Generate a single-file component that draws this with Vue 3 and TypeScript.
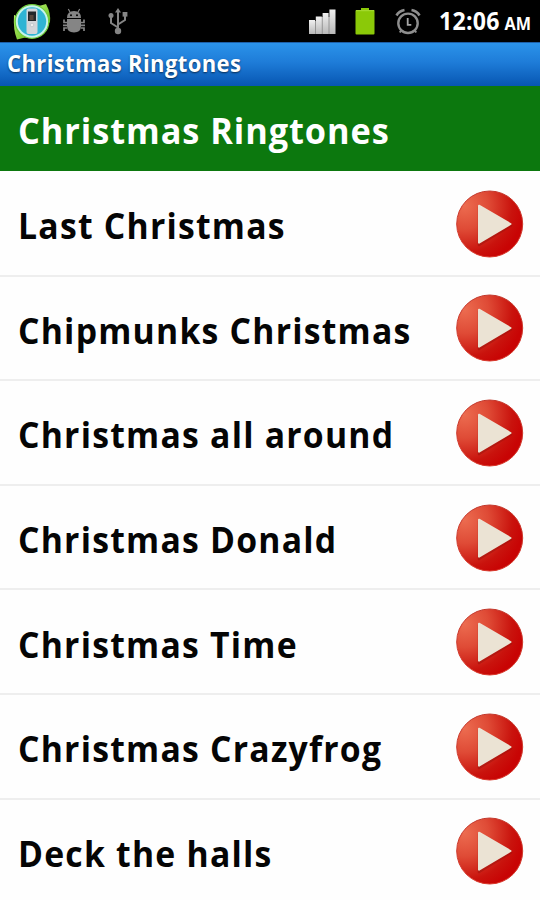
<script setup lang="ts">
interface Ringtone {
  id: string
  title: string
}

const title = 'Christmas Ringtones'

const ringtones: Ringtone[] = [
  { id: 'last', title: 'Last Christmas' },
  { id: 'chipmunks', title: 'Chipmunks Christmas' },
  { id: 'around', title: 'Christmas all around' },
  { id: 'donald', title: 'Christmas Donald' },
  { id: 'time', title: 'Christmas Time' },
  { id: 'crazyfrog', title: 'Christmas Crazyfrog' },
  { id: 'deck', title: 'Deck the halls' },
]
</script>

<template>
  <div class="screen">
    <header class="status">
      <svg class="app-icon" viewBox="0 0 40 42" width="40" height="42">
        <defs>
          <linearGradient id="leaf" x1="0" y1="0" x2="1" y2="1">
            <stop offset="0" stop-color="#b8ef6a" />
            <stop offset="1" stop-color="#62bb20" />
          </linearGradient>
        </defs>
        <path d="M2 15Q4 15 6 20Q8 33 20 37Q12 37 5 39.5Q1 30 2 15Z" fill="url(#leaf)" />
        <path d="M34 4Q39 13 38 22Q36 25 34 24L31 10Q27 7 23 6Q29 6 34 4Z" fill="url(#leaf)" />
        <circle cx="20" cy="21.5" r="16.8" fill="#c8f4ea" stroke="#72cc3b" stroke-width="1.3" />
        <circle cx="20" cy="21.5" r="14.2" fill="#2fb4d4" />
        <rect x="14.5" y="8.5" width="11" height="25.5" rx="2" fill="#d3d5d9" />
        <rect x="16" y="11.5" width="8" height="9.5" fill="#24282c" />
        <rect x="17.5" y="15" width="4" height="5" fill="#58483f" />
        <circle cx="20" cy="25" r="1.8" fill="#eee" stroke="#b8bfc5" stroke-width=".7" />
      </svg>
      <svg class="debug-icon" viewBox="0 0 24 26" width="24" height="26">
        <g fill="#858585" stroke="#858585">
          <path d="M5 10Q5 3 12 3T19 10Z" stroke="none" />
          <path d="M8 4L6.3 1M16 4L17.7 1" stroke-width="1.2" />
          <path d="M5 11H19V18Q19 24.5 12 24.5T5 18Z" stroke="none" />
          <path d="M5 14.5H2V11.5M5 17.3H1M5 20H2V23M19 14.5H22V11.5M19 17.3H23M19 20H22V23" fill="none" stroke-width="1.7" />
        </g>
        <circle cx="9" cy="7.2" r="1" fill="#000" />
        <circle cx="15" cy="7.2" r="1" fill="#000" />
      </svg>
      <svg class="usb-icon" viewBox="0 0 20 28" width="20" height="28">
        <path d="M10 4V24M10 20.5L3 16V9M10 17.5L17 13V7" fill="none" stroke="#858585" stroke-width="2" />
        <path d="M10 1L13 5.5H7Z" fill="#858585" />
        <circle cx="10" cy="24" r="3.2" fill="#858585" />
        <circle cx="3" cy="8.5" r="2.5" fill="#858585" />
        <rect x="14.6" y="5" width="4.8" height="4.6" fill="#858585" />
      </svg>
      <svg class="signal-icon" viewBox="0 0 27 26" width="27" height="26">
        <defs>
          <linearGradient id="bar" x1="0" y1="0" x2="0" y2="1">
            <stop offset="0" stop-color="#f0f0f0" />
            <stop offset="1" stop-color="#b8b8b8" />
          </linearGradient>
        </defs>
        <rect x="1" y="12" width="25" height="13" fill="#858585" />
        <rect x="8" y="8" width="18" height="6" fill="#858585" />
        <g fill="url(#bar)">
          <rect x="0" y="11" width="6" height="14" />
          <rect x="6.8" y="7.5" width="6" height="17.5" />
          <rect x="13.6" y="4" width="6" height="21" />
          <rect x="20.4" y="0.5" width="6.1" height="24.5" />
        </g>
      </svg>
      <svg class="battery-icon" viewBox="0 0 20 28" width="20" height="28">
        <path d="M6 3V1H14V3H19Q19.5 3 19.5 4V26.5Q19.5 27.5 18.5 27.5H1.5Q.5 27.5 .5 26.5V4Q.5 3 1.5 3Z" fill="#8bc908" />
        <path d="M1 3.7H19" stroke="#a9dc35" stroke-width="1" />
      </svg>
      <svg class="alarm-icon" viewBox="0 0 26 28" width="26" height="28">
        <circle cx="13" cy="16.3" r="9.7" fill="none" stroke="#8e8e8e" stroke-width="2.4" />
        <path d="M1.5 8.5Q4 4 9.5 3M24.5 8.5Q22 4 16.5 3" fill="none" stroke="#8e8e8e" stroke-width="2.6" />
        <path d="M6.5 23L4.8 25.5M19.5 23L21.2 25.5" stroke="#8e8e8e" stroke-width="2" />
        <path d="M12.7 11V17.8H16.3" fill="none" stroke="#a5a5a5" stroke-width="1.8" />
      </svg>
      <div class="clock"><span class="time">12:06</span><span class="period">AM</span></div>
    </header>

    <div class="titlebar"><span class="titlebar-text">{{ title }}</span></div>
    <h1 class="heading"><span class="heading-text">{{ title }}</span></h1>

    <ul class="list">
      <li v-for="tone in ringtones" :key="tone.id" class="row">
        <span class="name">{{ tone.title }}</span>
        <button class="play" type="button" :aria-label="tone.title">
          <svg viewBox="0 0 68 68" width="68" height="68">
            <defs>
              <radialGradient :id="'red-' + tone.id" cx=".12" cy=".22" r=".9">
                <stop offset="0" stop-color="#ec6c50" />
                <stop offset=".4" stop-color="#df4b36" />
                <stop offset=".8" stop-color="#c9130d" />
                <stop offset="1" stop-color="#c80404" />
              </radialGradient>
              <linearGradient :id="'rim-' + tone.id" x1="0" y1="0" x2="0" y2="1">
                <stop offset="0" stop-color="#c2372b" />
                <stop offset="1" stop-color="#d9382b" />
              </linearGradient>
            </defs>
            <circle cx="33.7" cy="34" r="33" :fill="`url(#red-${tone.id})`" :stroke="`url(#rim-${tone.id})`" stroke-width="1" />
            <path d="M23 17L55 35.5L23 55Z" fill="#8f100b" opacity=".4" stroke="#8f100b" stroke-width="2.5" stroke-linejoin="round" />
            <path d="M23 15.7L54.5 34L23 52.6Z" fill="#ebe3d4" stroke="#ebe3d4" stroke-width="2" stroke-linejoin="round" />
          </svg>
        </button>
      </li>
    </ul>
  </div>
</template>

<style>
body {
  margin: 0;
  background: #fefefe;
}
</style>

<style scoped>
.screen {
  width: 540px;
  height: 900px;
  overflow: hidden;
  display: flex;
  flex-direction: column;
  background: #fefefe;
  font-family: 'Open Sans', 'Noto Sans', sans-serif;
  font-weight: 700;
}
.status {
  flex: none;
  height: 42px;
  display: flex;
  align-items: center;
  box-sizing: border-box;
  padding-left: 12px;
  background: #000;
  color: #fff;
}
.debug-icon {
  margin-left: 10px;
}
.usb-icon {
  margin-left: 22px;
}
.signal-icon {
  margin-left: 181px;
  margin-top: 2px;
}
.battery-icon {
  margin-left: 19px;
}
.alarm-icon {
  margin-left: 20px;
}
.clock {
  display: flex;
  align-items: baseline;
  margin-left: 18px;
  line-height: 48px;
  white-space: nowrap;
  transform: scaleX(0.925);
  transform-origin: left;
}
.time {
  font-size: 25px;
  letter-spacing: 0.3px;
}
.period {
  margin-left: 5px;
  font-size: 17.5px;
}
.titlebar {
  flex: none;
  height: 43.5px;
  box-sizing: border-box;
  padding-left: 7px;
  border-top: 1px solid #1d5fa8;
  background: linear-gradient(#2b93ea, #1e7cd8 45%, #0756b2);
  color: #fff;
  font-size: 23px;
  letter-spacing: 0.4px;
  line-height: 41px;
  text-shadow: 0 1px 2px rgba(0, 0, 0, 0.6);
}
.titlebar-text,
.heading-text {
  display: inline-block;
  transform-origin: left;
}
.titlebar-text {
  transform: scaleX(0.957);
}
.heading {
  flex: none;
  height: 85.5px;
  margin: 0;
  box-sizing: border-box;
  padding-left: 18px;
  background: #0c780e;
  color: #fff;
  font-size: 36.5px;
  letter-spacing: 1px;
  line-height: 89px;
}
.heading-text {
  transform: scaleX(0.94);
}
.list {
  margin: 0;
  padding: 1px 0 0;
  list-style: none;
}
.row {
  height: 104.6px;
  box-sizing: border-box;
  display: flex;
  align-items: center;
  justify-content: space-between;
  padding: 1px 16px 0 18px;
  border-bottom: 2px solid #eee;
}
.name {
  color: #050505;
  font-size: 35.5px;
  letter-spacing: 1.3px;
  line-height: 50px;
  padding-top: 3px;
  white-space: nowrap;
  transform: scaleX(0.95);
  transform-origin: left;
}
.play {
  width: 68px;
  height: 68px;
  padding: 0;
  border: 0;
  background: none;
}
.play svg {
  display: block;
}
</style>
